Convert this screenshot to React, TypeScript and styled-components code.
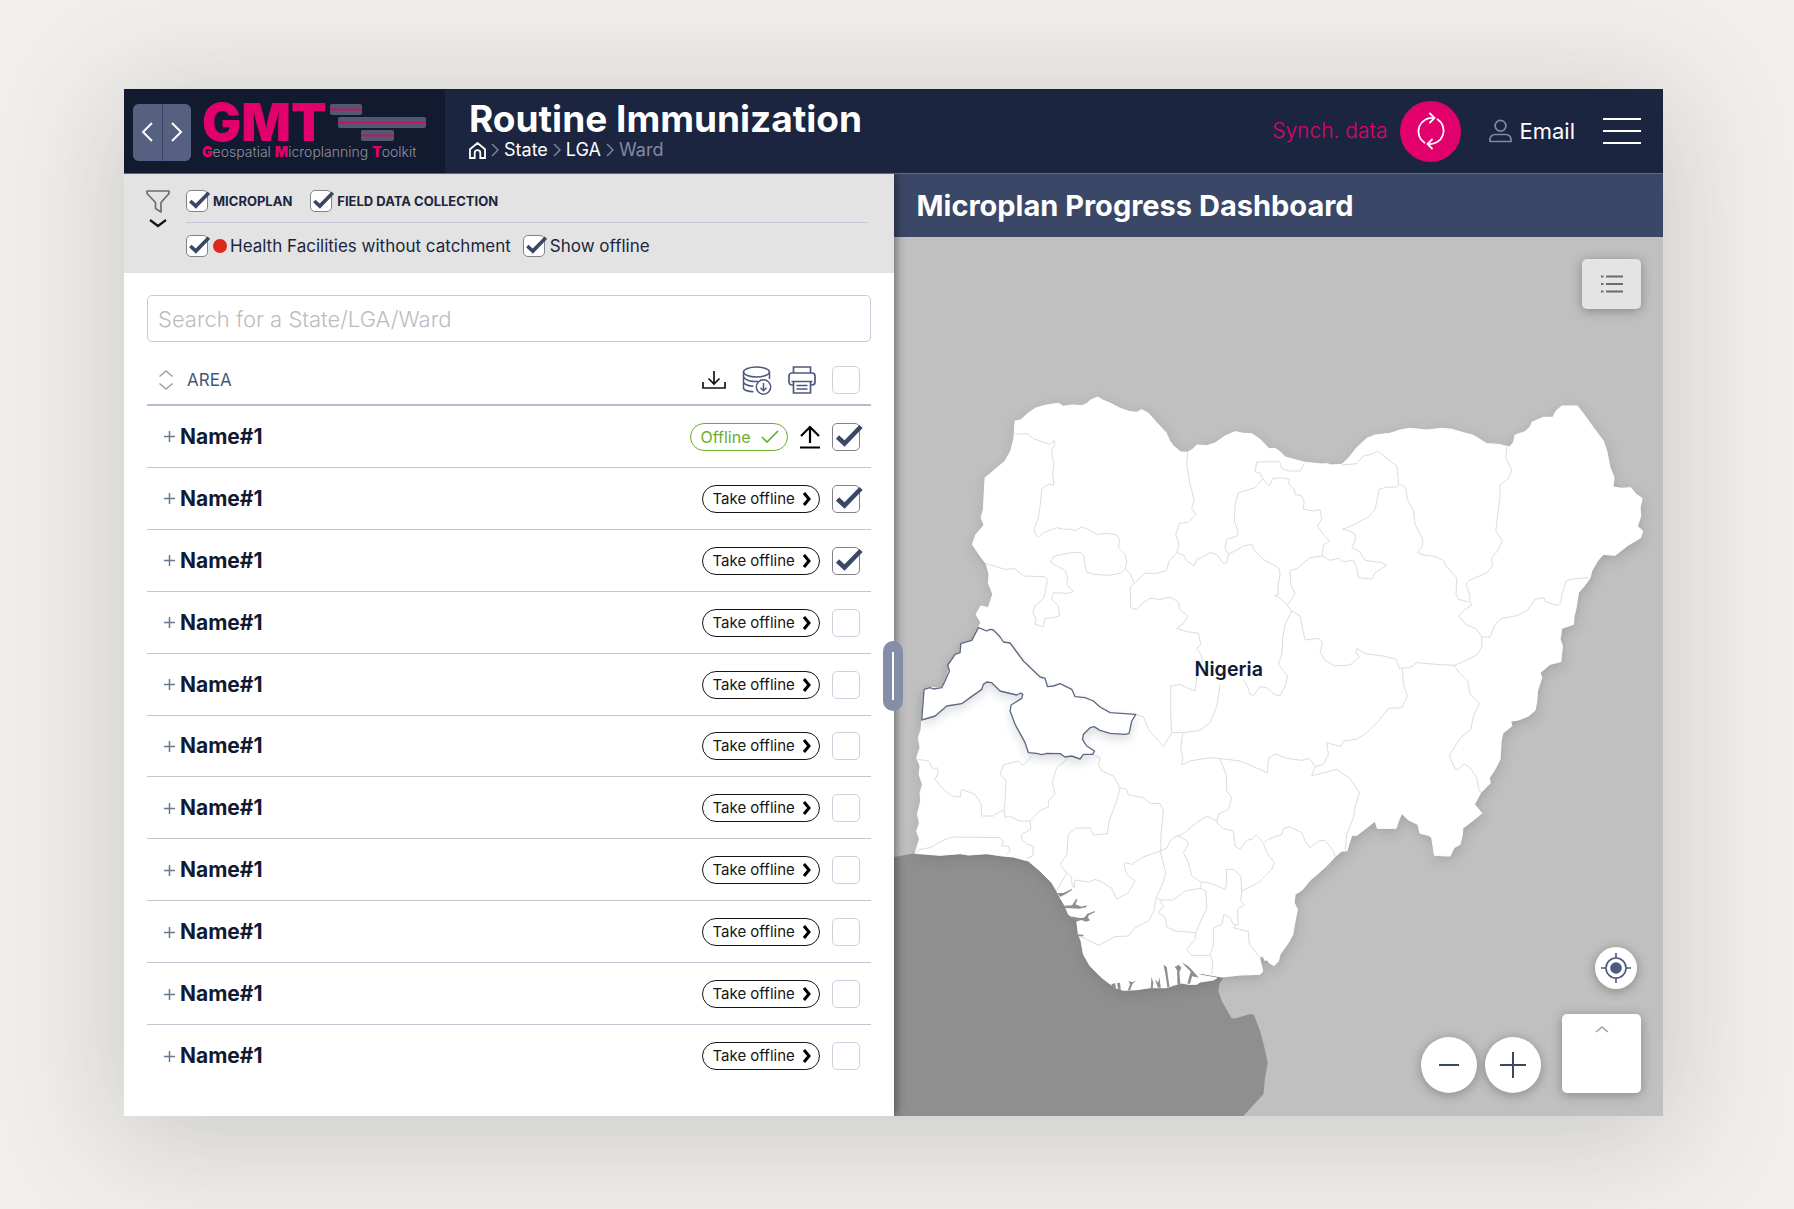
import React, { useState } from "react";
import styled, { createGlobalStyle, css } from "styled-components";

const navy = "#1b2540";
const slate = "#3b4766";
const ink = "#121a31";
const pink = "#e2006c";
const rule = "#c5cad9";

const GlobalStyle = createGlobalStyle`
  * { box-sizing: border-box; }
  body {
    margin: 0;
    background: #f0efed;
    color: ${ink};
    font-family: Inter, "Open Sans", sans-serif;
  }
  button, input { font: inherit; color: inherit; }
  button { padding: 0; border: 0; background: none; cursor: pointer; }
  h1, h2, p { margin: 0; }
  a { color: inherit; text-decoration: none; }
  svg { display: block; flex: none; }
`;

/* ---------- page ---------- */

const Page = styled.div`
  min-height: 100vh;
  padding: 89px 131px 93px 124px;
  display: flex;
  overflow: hidden;
`;

const Frame = styled.div`
  flex: 1;
  display: flex;
  flex-direction: column;
  background: #fff;
  box-shadow: 0 16px 110px 10px rgba(60, 58, 52, 0.2);
`;

const Header = styled.header`
  display: flex;
  height: 85px;
  background: ${navy};
  border-bottom: 1px solid #5d6885;
  color: #fff;
`;

const Brand = styled.div`
  display: flex;
  align-items: center;
  gap: 11px;
  width: 321px;
  padding-left: 9px;
  background: #121a30;
`;

const HistoryNav = styled.nav`
  display: grid;
  grid-template-columns: 1fr 1fr;
  gap: 1px;
  width: 58px;
  height: 57px;
  margin-top: 2px;
  border-radius: 6px;
  overflow: hidden;
  background: #3a4565;
`;

const HistoryButton = styled.button`
  display: grid;
  place-items: center;
  background: #566080;
`;

const Logo = styled.div`
  display: flex;
  flex-direction: column;
  padding-top: 2px;
`;

const LogoTop = styled.div`
  display: flex;
  align-items: flex-start;
  gap: 4px;
  height: 40px;
`;

const LogoName = styled.span`
  width: 124px;
  color: ${pink};
  font-size: 52px;
  line-height: 40px;
  font-weight: 900;
`;

const LogoTagline = styled.span`
  color: #8d94a6;
  font-size: 14px;
  line-height: 18px;
  font-weight: 300;
  white-space: nowrap;
  b { color: ${pink}; font-weight: 900; }
`;

const Heading = styled.div`
  flex: 1;
  padding: 10px 0 0 24px;
`;

const Title = styled.h1`
  font-size: 37px;
  line-height: 40px;
  font-weight: 700;
`;

const Crumbs = styled.nav`
  display: flex;
  align-items: center;
  gap: 4px;
  height: 22px;
  font-size: 18px;
  line-height: 22px;
`;

const Crumb = styled.a<{ $muted?: boolean }>`
  color: ${(p) => (p.$muted ? "#8089a0" : "#fff")};
`;

const Actions = styled.div`
  display: flex;
  align-items: center;
  padding-right: 22px;
  font-size: 21px;
  line-height: 28px;
`;

const SyncButton = styled.button`
  display: flex;
  align-items: center;
  gap: 13px;
  color: ${pink};
  font-weight: 300;
`;

const SyncDisc = styled.span`
  display: grid;
  place-items: center;
  width: 61px;
  height: 61px;
  border-radius: 50%;
  background: ${pink};
`;

const Account = styled.a`
  display: flex;
  align-items: center;
  gap: 7px;
  margin: 0 28px;
  font-size: 22px;
`;

/* ---------- two columns ---------- */

const Columns = styled.main`
  flex: 1;
  display: grid;
  grid-template-columns: 1fr 1fr;
`;

const AreaPane = styled.section`
  position: relative;
  z-index: 1;
  display: flex;
  flex-direction: column;
  background: #fff;
  box-shadow: 2px 0 9px rgba(0, 0, 0, 0.45);
  clip-path: inset(0 -24px 0 0);
`;

const Splitter = styled.div`
  position: absolute;
  top: 467px;
  right: -9px;
  display: grid;
  place-items: center;
  width: 20px;
  height: 70px;
  border-radius: 10px;
  background: #858ea8;
  &::after {
    content: "";
    width: 2px;
    height: 48px;
    background: #fff;
  }
`;

const Filters = styled.section`
  display: flex;
  gap: 16px;
  height: 99px;
  padding: 16px 26px 0 22px;
  background: #e3e3e3;
`;

const FilterToggle = styled.button`
  display: flex;
  flex-direction: column;
  align-items: center;
  gap: 5px;
  width: 24px;
  height: 38px;
`;

const FilterGroups = styled.div`
  flex: 1;
`;

const FilterRow = styled.div<{ $ruled?: boolean }>`
  display: flex;
  align-items: flex-start;
  gap: ${(p) => (p.$ruled ? 18 : 12)}px;
  ${(p) =>
    p.$ruled &&
    css`
      height: 33px;
      margin-bottom: 12px;
      border-bottom: 1px solid ${rule};
    `}
`;

const CheckLabel = styled.label<{ $strong?: boolean }>`
  display: flex;
  align-items: center;
  gap: 5px;
  color: ${navy};
  white-space: nowrap;
  font-size: ${(p) => (p.$strong ? 13 : 17)}px;
  line-height: 22px;
  font-weight: ${(p) => (p.$strong ? 700 : 400)};
`;

const StatusDot = styled.i`
  width: 14px;
  height: 14px;
  margin-right: -2px;
  border-radius: 50%;
  background: #dd261c;
`;

const TickWrap = styled.span<{ $size: number }>`
  position: relative;
  display: block;
  flex: none;
  width: ${(p) => p.$size}px;
  height: ${(p) => p.$size}px;
  svg {
    position: absolute;
    inset: 0;
    width: 100%;
    height: 100%;
    overflow: visible;
    pointer-events: none;
  }
`;

const TickInput = styled.input`
  appearance: none;
  display: block;
  width: 100%;
  height: 100%;
  margin: 0;
  border: 1px solid #d0d1dd;
  border-radius: 5px;
  background: #fff;
  cursor: pointer;
  &:checked { border-color: #808388; }
`;

const Listing = styled.section`
  flex: 1;
  display: flex;
  flex-direction: column;
  padding: 22px 23px 29px;
`;

const SearchBox = styled.input`
  height: 47px;
  padding: 0 10px;
  border: 1px solid #c6cad9;
  border-radius: 5px;
  background: #fff;
  font-size: 22px;
  outline: 0;
  &::placeholder { color: #bcbcbe; font-weight: 300; opacity: 1; }
`;

const AreaTable = styled.table`
  flex: 1;
  display: flex;
  flex-direction: column;
  margin-top: 14px;
`;

const AreaHead = styled.thead`
  display: block;
`;

const AreaBody = styled.tbody`
  flex: 1;
  display: grid;
  grid-auto-rows: 1fr;
`;

const AreaRow = styled.tr<{ $head?: boolean }>`
  display: flex;
  align-items: center;
  justify-content: space-between;
  padding: 1px 11px 0 17px;
  border-bottom: 1px solid #c3c6d2;
  &:last-child { border-bottom-color: transparent; }
  ${(p) =>
    p.$head &&
    css`
      height: 50px;
      padding: 0 11px 0 12px;
      && { border-bottom: 2px solid #b3bcd3; }
    `}
`;

const SortHeader = styled.th`
  padding: 0;
  color: #4a5679;
  font-size: 17px;
  line-height: 20px;
  font-weight: 400;
  button { display: flex; align-items: center; gap: 14px; }
`;

const ToolHeader = styled.th`
  display: flex;
  align-items: center;
  gap: 16px;
  padding: 0;
`;

const NameCell = styled.td`
  display: flex;
  align-items: center;
  gap: 5px;
  padding: 0;
  font-size: 21px;
  line-height: 28px;
  font-weight: 700;
`;

const ActionCell = styled.td`
  display: flex;
  align-items: center;
  gap: 12px;
  padding: 0;
`;

const Pill = styled.button<{ $done?: boolean }>`
  display: flex;
  align-items: center;
  justify-content: space-between;
  width: ${(p) => (p.$done ? 98 : 118)}px;
  height: 28px;
  padding: 0 8px 0 10px;
  border: 1px solid ${(p) => (p.$done ? "#6aae2c" : "#151515")};
  border-radius: 14px;
  color: ${(p) => (p.$done ? "#6aae2c" : "#151515")};
  font-size: ${(p) => (p.$done ? 16 : 15)}px;
  line-height: 20px;
  white-space: nowrap;
`;

/* ---------- map column ---------- */

const MapPane = styled.section`
  display: flex;
  flex-direction: column;
`;

const MapTitle = styled.h2`
  height: 63px;
  padding-left: 23px;
  background: ${slate};
  color: #fff;
  font-size: 29px;
  line-height: 63px;
  font-weight: 700;
  white-space: nowrap;
`;

const MapArea = styled.div`
  position: relative;
  flex: 1;
  background: #c0c0c0;
`;

const MapDrawing = styled.svg`
  position: absolute;
  inset: 0;
  width: 100%;
  height: 100%;
`;

const MapControls = styled.div`
  position: absolute;
  inset: 22px 22px 23px;
  display: flex;
  flex-direction: column;
  align-items: flex-end;
  justify-content: space-between;
`;

const ControlGroup = styled.div`
  display: flex;
  flex-direction: column;
  align-items: flex-end;
  gap: 25px;
`;

const ControlRow = styled.div`
  display: flex;
  align-items: flex-end;
  gap: 8px;
`;

const floating = css`
  display: grid;
  place-items: center;
  box-shadow: 0 2px 12px rgba(0, 0, 0, 0.3);
`;

const LegendButton = styled.button`
  ${floating}
  width: 59px;
  height: 50px;
  border-radius: 5px;
  background: #e4e4e4;
`;

const RoundButton = styled.button<{ $size: number }>`
  ${floating}
  width: ${(p) => p.$size}px;
  height: ${(p) => p.$size}px;
  border-radius: 50%;
  background: #fff;
`;

const LocateSlot = styled.div`
  padding-right: 4px;
`;

const LayerButton = styled.button`
  ${floating}
  align-items: start;
  width: 79px;
  height: 79px;
  margin-left: 13px;
  padding-top: 11px;
  border-radius: 5px;
  background: #fff;
`;

/* ---------- icons ---------- */

type ChevronProps = { d: string; w: number; h: number; color: string; stroke?: number };
const Chevron = ({ d, w, h, color, stroke = 2 }: ChevronProps) => (
  <svg width={w} height={h} viewBox={`0 0 ${w} ${h}`} fill="none" stroke={color} strokeWidth={stroke}>
    <path d={d} />
  </svg>
);

const CrumbArrow = () => <Chevron d="M2 2 8 8 2 14" w={10} h={16} color="#8089a0" stroke={1.4} />;

const LogoBars = () => (
  <svg width="96" height="40" viewBox="0 0 96 40">
    <g fill="#535a70">
      <rect x="0" y="1" width="32" height="11" rx="2" />
      <rect x="8" y="14" width="88" height="11" rx="2" />
      <rect x="31" y="27" width="33" height="11" rx="2" />
    </g>
    <path d="M0 6.5H32M8 19.5H96M31 32.5H64" stroke="#c4106b" strokeWidth="1.8" />
  </svg>
);

const HomeIcon = () => (
  <svg width="17" height="17" viewBox="0 0 17 17" fill="none" stroke="#fff" strokeWidth="1.8">
    <path d="M1 7.2 8.5 1 16 7.2V16H11.3V11A2.8 2.8 0 0 0 5.7 11V16H1Z" />
  </svg>
);

const SyncIcon = () => (
  <svg width="30" height="38" viewBox="0 0 30 38" fill="none" stroke="#fff" strokeWidth="1.8" strokeLinecap="round">
    <path d="M8.5 30.7A13.5 13.5 0 0 1 17.5 6" />
    <path d="M21.5 7.3A13.5 13.5 0 0 1 12.5 32" />
    <path d="M14 1.5 18.5 6 14 10.5M16 27.5 11.5 32 16 36.5" />
  </svg>
);

const UserIcon = () => (
  <svg width="23" height="24" viewBox="0 0 23 24" fill="none" stroke="#8089a0" strokeWidth="1.7">
    <circle cx="11.5" cy="6.8" r="5.4" />
    <path d="M1 22.5V20.5A5 5 0 0 1 6 15.5H17A5 5 0 0 1 22 20.5V22.5Z" strokeLinejoin="round" />
  </svg>
);

const MenuIcon = () => (
  <svg width="38" height="28" viewBox="0 0 38 28" stroke="#fff" strokeWidth="2">
    <path d="M0 2H38M0 14H38M0 26H38" />
  </svg>
);

const FunnelIcon = () => (
  <svg width="24" height="23" viewBox="0 0 24 23" fill="none" stroke="#6d6d6d" strokeWidth="1.7" strokeLinejoin="round">
    <path d="M1 1H23V3.500L15 12.500V22L9.500 18.500V12.500L1 3.500Z" />
  </svg>
);

const SortIcon = () => (
  <svg width="14" height="20" viewBox="0 0 14 20" fill="none" stroke="#9c9da2" strokeWidth="1.4">
    <path d="M.5 6.500 7 1 13.500 6.500M.5 13.500 7 19 13.500 13.500" />
  </svg>
);

const DownloadIcon = () => (
  <svg width="24" height="18" viewBox="0 0 24 18" fill="none" stroke="#151515" strokeWidth="1.7">
    <path d="M1 11V17H23V11M12 0V12.500M6.500 7.500 12 13 17.500 7.500" />
  </svg>
);

const DatabaseIcon = () => (
  <svg width="30" height="29" viewBox="0 0 30 29" fill="none" stroke="#4d597d" strokeWidth="1.5">
    <ellipse cx="14.5" cy="6" rx="13" ry="5" />
    <path d="M1.500 6V22.500C3 25 7 25.500 11.500 25.800M1.500 10.500C3 14.500 10 16 16 15.300M1.500 16.500C3 19 7 20 11.500 20.300M27.500 6V13" />
    <circle cx="21.5" cy="21" r="7.2" />
    <path d="M21.500 17V24.500M18.500 21.800 21.500 24.800 24.500 21.800" />
  </svg>
);

const PrinterIcon = () => (
  <svg width="28" height="28" viewBox="0 0 28 28" fill="none" stroke="#4d597d" strokeWidth="1.7">
    <path d="M5.500 7V1H22.500V7M5.500 19H4A3 3 0 0 1 1 16V10A3 3 0 0 1 4 7H24A3 3 0 0 1 27 10V16A3 3 0 0 1 24 19H22.500" />
    <path d="M5.500 15.500H22.500V27H5.500ZM3.500 15.500H24.500M8.500 19.500H19.500M8.500 23H19.500" />
  </svg>
);

const UploadIcon = () => (
  <svg width="20" height="24" viewBox="0 0 20 24" fill="none" stroke="#000" strokeWidth="2.2">
    <path d="M0 22.500H20M10 18V2M1 11 10 2 19 11" />
  </svg>
);

const PlusIcon = ({ size, color, stroke }: { size: number; color: string; stroke: number }) => (
  <svg width={size} height={size} viewBox={`0 0 ${size} ${size}`} stroke={color} strokeWidth={stroke}>
    <path d={`M0 ${size / 2}H${size}M${size / 2} 0V${size}`} />
  </svg>
);

const ListIcon = () => (
  <svg width="22" height="20" viewBox="0 0 22 20" stroke="#6c6c6c" strokeWidth="2.2">
    <path d="M0 2.500H2.500M5 2.500H22M0 10H2.500M5 10H22M0 17.500H2.500M5 17.500H22" />
  </svg>
);

const LocateIcon = () => (
  <svg width="30" height="30" viewBox="0 0 30 30" fill="none" stroke="#4d597d" strokeWidth="1.6">
    <circle cx="15" cy="15" r="10" />
    <circle cx="15" cy="15" r="5.8" fill="#4d597d" stroke="none" />
    <path d="M15 0V5M15 25V30M0 15H5M25 15H30" />
  </svg>
);

type TickBoxProps = { size: number; label?: string; initial?: boolean };
function TickBox({ size, label, initial = false }: TickBoxProps) {
  const [on, setOn] = useState(initial);
  return (
    <TickWrap $size={size}>
      <TickInput type="checkbox" aria-label={label} checked={on} onChange={() => setOn(!on)} />
      {on && (
        <svg viewBox="0 0 28 28" fill="none" stroke={slate} strokeWidth="4.6">
          <path d="M5.500 14 12.500 20.500 29 3.500" />
        </svg>
      )}
    </TickWrap>
  );
}

/* ---------- map data: survey sheets, each with its own origin ---------- */

type Sheet = "NW" | "NE" | "SW" | "SE" | "S";
const origin: Record<Sheet, [number, number]> = {
  NW: [0, 0],
  NE: [1110, 0],
  SW: [-30, 660],
  SE: [1050, 720],
  S: [330, 1260],
};
type Part = [Sheet, string];

const line = (...parts: Part[]) =>
  "M" +
  parts
    .flatMap(([sheet, points]) =>
      points.split(" ").map((pair) => {
        const [x, y] = pair.split(",").map(Number);
        return `${x + origin[sheet][0]} ${y + origin[sheet][1]}`;
      })
    )
    .join("L");

const coast = line(
  ["NW", "375,120 392,117 410,100 435,82 465,73 505,67 520,76 545,72 575,74 590,68 600,58 622,48 640,58 660,66 690,82 720,92 740,94 755,86 775,97 800,125 828,155 838,178 850,195 872,213 893,214 910,203 920,192 950,194 975,186 1005,165 1035,152 1060,157 1085,158 1110,175 1137,203 1155,202 1172,214"],
  ["NE", "75,228 100,235 135,244 185,249 200,248 215,252 245,250 265,232 290,200 320,172 345,162 390,157 420,147 450,142 500,147 545,142 575,145 610,155 640,163 680,188 715,190 748,198 760,185 765,162 795,152 812,135 815,124 850,109 878,109 888,90 905,75 952,75 975,105 1000,140 1030,180 1040,210 1050,260 1062,290 1058,318 1085,322 1112,320 1128,340 1146,352 1140,380 1142,405 1132,436 1148,450 1142,470 1105,492 1065,523 1030,520 1012,540 995,570 990,590 975,612 955,635 948,680 942,705 940,730 905,742 900,775 907,795 902,842 870,850 840,875 845,890 832,930 830,960"],
  ["SE", "885,268 865,285 835,297 812,300 815,315 788,337 783,360 780,415 762,450 748,470 750,487 722,515 703,550 725,577 690,605 668,622 667,640 660,670 642,680 630,705 583,703 575,650 565,643 540,637 533,610 505,597 485,577 475,600 468,622 412,622 405,600 380,620 350,643 335,643 320,690 305,690 285,707 262,732 240,752 210,778 185,808 165,820 162,845 172,865 165,900"],
  ["S", "878,400 865,425 840,460 835,480 822,494 808,486 800,474 796,480 788,465 778,470 788,510 780,520 720,522 665,528 590,515 604,523 650,531 640,537 600,543 590,550 565,550 545,546 520,553 500,560 450,560 410,566 370,568 345,560 305,530 270,495 250,460 243,420 235,400 230,360 205,340 195,315 180,290 170,270 155,245 120,210 85,180 40,168 0,164"],
  ["SW", "320,758 265,762 240,758 180,763 105,757 118,715 110,690 118,665 112,640 122,600 120,575 127,550 117,520 120,495 110,470 120,440 115,410 123,385 125,357 132,265 150,260 185,260 200,230 208,195 215,175 240,155 242,128 275,118 295,80"],
  ["NW", "272,725 258,700 272,675 295,680 308,640 295,605 297,580 288,548 268,522 247,490 258,460 282,432 273,410 280,385 285,290 300,278 345,240 362,210 372,170"]
) + "Z";

const sea = line(
  ["SW", "-60,772 42,768 105,757 180,740 500,740"],
  ["S", "300,400 600,500 670,530 658,548 655,570 665,600 695,652 710,651 750,639 762,642 780,690 792,735 803,785 795,830 790,880 730,945 600,1160 -500,1160"]
) + "Z";

const selected = line([
  "SW",
  "295,80 320,90 330,85 340,87 360,108 370,123 390,126 430,180 480,228 495,232 502,257 520,255 540,248 575,265 585,287 615,290 640,300 660,318 690,335 767,340 755,360 747,397 735,400 690,397 660,388 642,377 630,380 610,400 607,415 620,435 643,450 638,460 610,460 600,474 575,465 555,468 540,458 500,457 485,461 470,457 445,455 435,425 405,370 390,330 393,312 425,292 428,280 422,276 410,282 360,270 335,245 320,243 310,250 305,265 270,290 245,308 200,315 165,345 125,357 132,265 150,260 160,264 185,260 195,240 208,210 203,192 215,175 225,160 240,155 242,128 275,118",
]) + "Z";

const borders = [
  line(["NW", "375,157 390,160 410,158 430,173 455,182 480,190 492,178 494,190 485,205 487,230 492,245 488,275 491,312 475,310 455,322 452,360 445,410 432,445 437,462 445,468 465,453 500,440 520,445 540,444 555,449 575,438 595,445 620,460 650,457 680,462 688,475 685,500 705,520 710,540 705,565 690,577 655,583 610,580 590,573 583,545 582,525 572,514 545,515 515,520 490,527 482,543 500,555 525,568 533,590 530,610 550,632 535,637 490,635 485,655 505,675 508,705 490,710 465,712 460,738 435,730 438,715 428,695 435,675 462,650 472,595 462,587 400,585 375,563 345,565 288,548"]),
  line(["NW", "705,565 722,580 732,607 750,590 765,577 800,577 830,568 837,540 860,515 867,490 857,460 868,427 895,424 917,402 905,380 912,355 900,310 890,250 893,214"]),
  line(["NW", "732,607 720,620 722,680 740,686 755,668 780,652 810,655 838,648 865,662 868,685 893,705 880,728 860,742 890,752 925,757 932,790 920,803 932,820 937,840"], ["SW", "955,195 950,230 945,270 920,260 900,250 872,255 872,350 875,395"]),
  line(["NW", "860,515 880,522 890,540 912,555 920,535 935,530 960,515 980,520 1000,548 1010,545 1015,520 1005,500 1010,475 1040,465 1045,455 1033,420 1035,370 1045,335 1095,320 1118,293 1137,315 1148,293 1175,290"], ["NE", "87,295 87,310 103,325 105,340 125,345 132,362 130,385 160,390 180,385 185,415 172,435 190,460 208,480 190,492 187,525 210,538 235,532 250,542 280,538 290,560 295,590 335,594 345,575 380,553 365,545 315,538 297,510 275,500 285,480 285,460 270,450 247,445 280,432 325,408 345,385 358,325 380,318 410,318 416,308 410,255 390,240 352,210 335,220 310,225 290,248 245,252"]),
  line(["NW", "1118,293 1110,277 1095,272 1100,243 1165,242"], ["NE", "60,245 65,262 85,270 120,270 132,248"]),
  line(["NW", "1015,520 1040,507 1060,495 1085,490 1092,507 1120,535 1165,560 1170,580 1163,620 1165,640 1152,644 1168,650"], ["NE", "82,672"]),
  line(["NE", "416,308 437,320 442,355 460,390 465,430 488,475 487,495 472,515 490,522 520,525 550,538 560,558 590,590 588,640 595,655 625,663"]),
  line(["NE", "740,198 737,230 755,268 745,292 720,312 720,350 713,400 707,450 727,480 712,510 695,530 697,555 680,575 625,600 618,610 630,645 628,660 635,672 615,685 596,705 617,730 650,745 665,768 665,800 650,822 610,842 582,853 540,851 470,845 450,860 418,862 408,835 370,825 315,818 290,802 288,815 297,828 270,852 225,855 195,838 180,815 187,785 175,772 135,777 127,740 120,705 95,690 82,672 105,638 92,610 90,568 110,563 150,530 187,525"]),
  line(["NE", "665,768 690,768 705,730 725,712 770,704 800,690 825,655 850,650 857,662 893,674 903,665 905,640 918,600 940,594 985,590"]),
  line(["NE", "95,690 75,730 68,770 65,820 55,850 82,885 78,910 60,943 45,942 20,920 0,917 -20,943 -30,940 -38,915 -50,895"]),
  line(["SE", "487,145 490,190 502,225 485,260 445,262 415,300 380,335 350,355 310,360 302,377 260,365 265,400 250,430 225,437 208,412 185,418 140,412 105,398 85,412 82,455 0,420"], ["SW", "1040,475 1000,470 970,473 930,480 905,492 908,470 902,440 908,397"]),
  line(["SW", "765,340 790,347 805,385 850,437 875,395 910,395 960,388 990,365 1010,315 1018,270 1018,250"]),
  line(["SE", "642,132 655,152 683,180 690,220 718,248 700,285 692,325 660,352 628,403 645,445 655,445 672,428 690,440 710,470 715,500 722,515"]),
  line(["SE", "225,437 215,465 290,445 330,473 358,515 345,560 340,590 320,640 315,690"]),
  line(["SW", "1020,473 1038,520 1040,570 1055,590 1045,625 1015,640 1010,665 1030,683 1060,690 1065,735 1080,745 1100,718 1115,715 1128,702 1150,725"], ["SE", "85,655 125,640 130,622 150,617 185,635 195,660 210,680 235,660 255,658 280,690 285,707"]),
  line(["SW", "1010,660 980,645 950,665 910,697 885,708 870,720 860,742 842,750 790,768"], ["S", "395,190 375,185 372,195 380,220 405,240 385,275 350,295 335,262 310,245 285,235 265,243 225,237 222,262 215,245 215,228 200,215 180,190 200,160 205,100 225,82 270,80 280,102 322,98 327,60 350,0"], ["SW", "720,560 740,565 745,582 790,590 810,607 840,608 850,630 843,700 842,750"], ["S", "480,150 497,215 487,250 468,290 462,330 445,360 405,380 385,405 345,407 295,433 240,405"]),
  line(["SW", "720,560 700,525 665,510 655,490 660,470 640,462"]),
  line(["SW", "560,475 530,500 517,545 525,578 505,600 505,618 480,628 450,660 452,685 425,700 425,715 440,730 460,735 458,765 440,772"]),
  line(["SW", "450,660 420,660 385,645 375,650 372,628 375,600 378,540 360,520 370,492 415,480 430,493 455,465"]),
  line(["SW", "372,628 350,637 340,645 305,645 303,610 285,580 245,565 240,588 215,585 185,560 165,535 175,515 170,500 160,505 145,480 115,475"]),
  line(["SW", "105,757 120,745 150,740 185,720 215,708 360,710 370,720 365,735 385,735 390,750 380,760"]),
  line(["S", "530,103 560,118 565,130 550,155 565,185 575,225 605,245 600,262 555,270 540,282 520,297 480,297 468,290"]),
  line(["S", "605,242 640,250 675,265 680,245 678,205 700,205 722,225 725,270 775,245 815,205 823,185 800,155 790,127"]),
  line(["S", "480,297 490,315 475,335 495,348 500,378 525,390 587,395 620,320 617,270 600,262"]),
  line(["S", "587,395 585,415 560,445 575,463 630,463 638,485 635,520"]),
  line(["S", "630,463 640,430 640,380 665,370 672,340 690,350 700,370 712,372 700,380 745,392 748,430 780,470"]),
  line(["S", "725,270 722,300 733,312 712,325 715,370"]),
  line(["S", "200,215 170,270"]),
].join("");

/* inlets narrow towards their inland end, so they are filled shapes */
const creeks = [
  line(["S", "172,276 190,276 215,264 216,267 196,280 180,288"]),
  line(["S", "192,314 216,313 228,294 232,296 226,310 244,317 260,313 258,319 238,323 196,321"]),
  line(["S", "210,346 240,351 252,350 262,338 285,330 284,334 266,343 264,350 270,358 258,362 244,357 228,362"]),
  line(["S", "228,400 250,401 250,406 232,406"]),
  line(["S", "338,562 334,550 345,546 348,562"]),
  line(["S", "354,566 351,546 360,545 362,567"]),
  line(["S", "383,568 390,550 385,540 397,544 407,538 396,551 390,568"]),
  line(["S", "452,562 454,528 460,545 458,562"]),
  line(["S", "474,560 464,535 474,545 478,529 482,560"]),
  line(["S", "502,560 496,520 490,491 500,498 508,557"]),
  line(["S", "532,552 531,508 524,498 536,491 544,500 538,512 541,550"]),
  line(["S", "562,548 567,528 572,512 560,500 545,484 565,496 582,514 596,530 576,526 570,548"]),
].join("Z") + "Z";

const CountryMap = () => (
  <MapDrawing viewBox="11 -432 2310 2637" preserveAspectRatio="xMidYMid slice" role="img" aria-label="Map of Nigeria">
    <defs>
      <filter id="lift" x="-10%" y="-10%" width="120%" height="120%">
        <feDropShadow dx="4" dy="12" stdDeviation="18" floodColor="#3c3f48" floodOpacity="0.2" />
      </filter>
      <filter id="liftSelected" x="-20%" y="-20%" width="140%" height="150%">
        <feDropShadow dx="0" dy="14" stdDeviation="12" floodColor="#30384f" floodOpacity="0.16" />
      </filter>
    </defs>
    <path d={sea} fill="#8f8f8f" />
    <path d={coast} fill="#fff" stroke="#fff" strokeWidth="3" strokeLinejoin="round" filter="url(#lift)" />
    <path d={borders} fill="none" stroke="#dcdcdc" strokeWidth="3" strokeLinejoin="round" />
    <path d={creeks} fill="#8f8f8f" />
    <path d={selected} fill="#fff" stroke="#5f6883" strokeWidth="4" strokeLinejoin="round" filter="url(#liftSelected)" />
    <text x="1016" y="886" textAnchor="middle" fontSize="59" fontWeight="600" fill={ink}>
      Nigeria
    </text>
  </MapDrawing>
);

/* ---------- content ---------- */

const areas = Array.from({ length: 11 }, (_, i) => ({
  id: i + 1,
  name: "Name#1",
  offline: i === 0,
  picked: i < 3,
}));

export default function App() {
  const [query, setQuery] = useState("");
  return (
    <>
      <GlobalStyle />
      <Page>
        <Frame>
          <Header>
            <Brand>
              <HistoryNav aria-label="History">
                <HistoryButton aria-label="Back">
                  <Chevron d="M11 1 2 10 11 19" w={12} h={20} color="#fff" />
                </HistoryButton>
                <HistoryButton aria-label="Forward">
                  <Chevron d="M1 1 10 10 1 19" w={12} h={20} color="#fff" />
                </HistoryButton>
              </HistoryNav>
              <Logo>
                <LogoTop>
                  <LogoName>GMT</LogoName>
                  <LogoBars />
                </LogoTop>
                <LogoTagline>
                  <b>G</b>eospatial <b>M</b>icroplanning <b>T</b>oolkit
                </LogoTagline>
              </Logo>
            </Brand>
            <Heading>
              <Title>Routine Immunization</Title>
              <Crumbs aria-label="Breadcrumb">
                <Crumb href="#home" aria-label="Home">
                  <HomeIcon />
                </Crumb>
                <CrumbArrow />
                <Crumb href="#state">State</Crumb>
                <CrumbArrow />
                <Crumb href="#lga">LGA</Crumb>
                <CrumbArrow />
                <Crumb href="#ward" $muted>
                  Ward
                </Crumb>
              </Crumbs>
            </Heading>
            <Actions>
              <SyncButton>
                Synch. data
                <SyncDisc>
                  <SyncIcon />
                </SyncDisc>
              </SyncButton>
              <Account href="#account">
                <UserIcon />
                Email
              </Account>
              <button aria-label="Menu">
                <MenuIcon />
              </button>
            </Actions>
          </Header>

          <Columns>
            <AreaPane>
              <Filters>
                <FilterToggle aria-label="Filters">
                  <FunnelIcon />
                  <Chevron d="M1 2 9 8 17 2" w={18} h={10} color="#151515" stroke={2.2} />
                </FilterToggle>
                <FilterGroups>
                  <FilterRow $ruled>
                    <CheckLabel $strong>
                      <TickBox size={22} initial />
                      MICROPLAN
                    </CheckLabel>
                    <CheckLabel $strong>
                      <TickBox size={22} initial />
                      FIELD DATA COLLECTION
                    </CheckLabel>
                  </FilterRow>
                  <FilterRow>
                    <CheckLabel>
                      <TickBox size={22} initial />
                      <StatusDot />
                      Health Facilities without catchment
                    </CheckLabel>
                    <CheckLabel>
                      <TickBox size={22} initial />
                      Show offline
                    </CheckLabel>
                  </FilterRow>
                </FilterGroups>
              </Filters>

              <Listing>
                <SearchBox
                  aria-label="Search"
                  placeholder="Search for a State/LGA/Ward"
                  value={query}
                  onChange={(e) => setQuery(e.target.value)}
                />
                <AreaTable>
                  <AreaHead>
                    <AreaRow $head>
                      <SortHeader>
                        <button>
                          <SortIcon />
                          AREA
                        </button>
                      </SortHeader>
                      <ToolHeader>
                        <button aria-label="Download">
                          <DownloadIcon />
                        </button>
                        <button aria-label="Save data">
                          <DatabaseIcon />
                        </button>
                        <button aria-label="Print">
                          <PrinterIcon />
                        </button>
                        <TickBox size={28} label="Select all" />
                      </ToolHeader>
                    </AreaRow>
                  </AreaHead>
                  <AreaBody>
                    {areas.map((area) => (
                      <AreaRow key={area.id}>
                        <NameCell>
                          <button aria-label="Expand">
                            <PlusIcon size={11} color="#6b7694" stroke={1.5} />
                          </button>
                          {area.name}
                        </NameCell>
                        <ActionCell>
                          {area.offline ? (
                            <>
                              <Pill $done>
                                Offline
                                <Chevron d="M1 8 6 13 17 2" w={18} h={15} color="#6aae2c" stroke={1.6} />
                              </Pill>
                              <button aria-label="Upload">
                                <UploadIcon />
                              </button>
                            </>
                          ) : (
                            <Pill>
                              Take offline
                              <Chevron d="M1 1 6 7 1 13" w={8} h={14} color="#000" stroke={3} />
                            </Pill>
                          )}
                          <TickBox size={28} label="Select area" initial={area.picked} />
                        </ActionCell>
                      </AreaRow>
                    ))}
                  </AreaBody>
                </AreaTable>
              </Listing>
              <Splitter role="separator" aria-orientation="vertical" />
            </AreaPane>

            <MapPane>
              <MapTitle>Microplan Progress Dashboard</MapTitle>
              <MapArea>
                <CountryMap />
                <MapControls>
                  <LegendButton aria-label="Legend">
                    <ListIcon />
                  </LegendButton>
                  <ControlGroup>
                    <LocateSlot>
                      <RoundButton $size={42} aria-label="Locate">
                        <LocateIcon />
                      </RoundButton>
                    </LocateSlot>
                    <ControlRow>
                      <RoundButton $size={56} aria-label="Zoom out">
                        <Chevron d="M0 2H20" w={20} h={4} color={slate} />
                      </RoundButton>
                      <RoundButton $size={56} aria-label="Zoom in">
                        <PlusIcon size={26} color={slate} stroke={2} />
                      </RoundButton>
                      <LayerButton aria-label="Layers">
                        <Chevron d="M1 7 7 2 13 7" w={14} h={8} color="#a0a0a0" stroke={1.6} />
                      </LayerButton>
                    </ControlRow>
                  </ControlGroup>
                </MapControls>
              </MapArea>
            </MapPane>
          </Columns>
        </Frame>
      </Page>
    </>
  );
}
